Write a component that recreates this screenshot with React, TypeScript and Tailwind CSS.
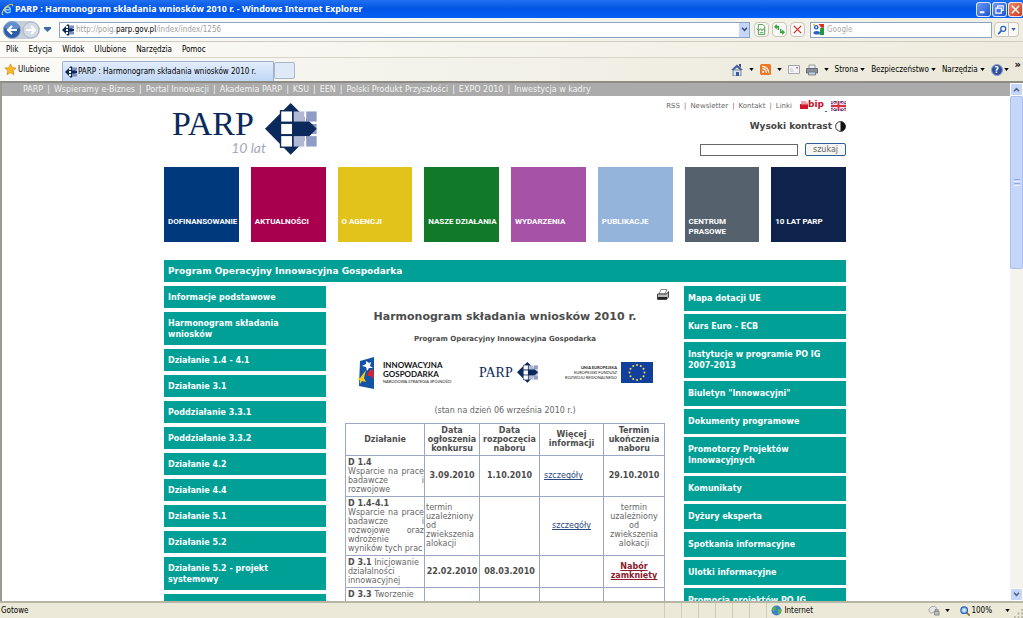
import type { ReactNode } from 'react';
import clsx from 'clsx';

const topLinks = [
  'PARP',
  'Wspieramy e-Biznes',
  'Portal Innowacji',
  'Akademia PARP',
  'KSU',
  'EEN',
  'Polski Produkt Przyszłości',
  'EXPO 2010',
  'Inwestycja w kadry',
];

const tiles = [
  { label: 'DOFINANSOWANIE', color: 'bg-[#003a7d]' },
  { label: 'AKTUALNOŚCI', color: 'bg-[#a8004f]' },
  { label: 'O AGENCJI', color: 'bg-[#e2c31c]' },
  { label: 'NASZE DZIAŁANIA', color: 'bg-[#117a2a]' },
  { label: 'WYDARZENIA', color: 'bg-[#a652a6]' },
  { label: 'PUBLIKACJE', color: 'bg-[#94b4dc]' },
  { label: 'CENTRUM PRASOWE', color: 'bg-[#55626e]' },
  { label: '10 LAT PARP', color: 'bg-[#0e234b]' },
];

const leftMenu = [
  'Informacje podstawowe',
  'Harmonogram składania wniosków',
  'Działanie 1.4 - 4.1',
  'Działanie 3.1',
  'Poddziałanie 3.3.1',
  'Poddziałanie 3.3.2',
  'Działanie 4.2',
  'Działanie 4.4',
  'Działanie 5.1',
  'Działanie 5.2',
  'Działanie 5.2 - projekt systemowy',
];

const rightMenu = [
  'Mapa dotacji UE',
  'Kurs Euro - ECB',
  'Instytucje w programie PO IG 2007-2013',
  'Biuletyn "Innowacyjni"',
  'Dokumenty programowe',
  'Promotorzy Projektów Innowacyjnych',
  'Komunikaty',
  'Dyżury eksperta',
  'Spotkania informacyjne',
  'Ulotki informacyjne',
  'Promocja projektów PO IG',
];

function Caret({ className = 'text-black' }: { className?: string }) {
  return (
    <svg viewBox="0 0 6 4" className={clsx('h-[3px] w-[5px] shrink-0', className)} aria-hidden="true">
      <path d="M0 0h6L3 4z" fill="currentColor" />
    </svg>
  );
}

function IeLogo() {
  return (
    <svg viewBox="0 0 14 14" className="size-[13px] shrink-0" aria-hidden="true">
      <path d="M11 8.2H5.2c.2 1.700 3 2 4 .6h2c-1 3.400-8 3.600-8.300-1.600C2.900 2 11 1.400 11 8.200zM5.300 6.500h3.600c-.3-1.700-3.200-1.800-3.600 0z" fill="#7fd0fa" />
      <path d="M2.500 12.500C-.5 13 2 6.500 7 3c3-2 6-2.600 5.500.5" fill="none" stroke="#f2c443" strokeWidth="1.200" />
    </svg>
  );
}

function ParpMark({ className }: { className: string }) {
  return (
    <svg viewBox="0 0 154 154" className={clsx('shrink-0', className)} aria-hidden="true">
      <rect x="122" y="62" width="31" height="30" fill="#8f9cc6" />
      <path d="M0 76 76 0l77 76-77 77z" fill="#0b2a5b" />
      <rect x="44" y="21" width="40" height="112" fill="#0b2a5b" />
      <rect x="48" y="25" width="32" height="30" fill="#fff" />
      <rect x="48" y="62" width="32" height="30" fill="#fff" />
      <rect x="48" y="98" width="32" height="31" fill="#fff" />
      <rect x="85" y="25" width="32" height="30" fill="#b1b8d3" />
      <rect x="85" y="98" width="32" height="31" fill="#b1b8d3" />
      <path d="M117 25h5v30h-5zM117 98h5v31h-5z" fill="#fff" />
      <rect x="122" y="25" width="31" height="30" fill="#8f9cc6" />
      <rect x="122" y="98" width="31" height="31" fill="#8f9cc6" />
    </svg>
  );
}

// simplified emblem for the 11px favicon slots
function Favicon() {
  return (
    <svg viewBox="0 0 12 12" className="size-[12px] shrink-0" aria-hidden="true">
      <path d="M0 6 6 0l6 6-6 6z" fill="#0b2a5b" />
      <path d="M7 1.500h5v3H7zM7 7.500h5v3H7z" fill="#7d8db9" />
      <path d="M4 2h2v2H4zM4 5h2v2H4zM4 8h2v2H4z" fill="#fff" />
      <path d="M6 5h6v2H6z" fill="#0b2a5b" />
    </svg>
  );
}

function TitleButton({ label, red, children }: { label: string; red?: boolean; children: ReactNode }) {
  return (
    <button
      type="button"
      aria-label={label}
      className={clsx(
        'flex size-[15px] items-center justify-center rounded-[3px] border border-white/80',
        red ? 'bg-linear-to-br from-[#f08a6a] to-[#c8381a]' : 'bg-linear-to-br from-[#6f9bf5] to-[#1f50d0]'
      )}
    >
      <svg viewBox="0 0 12 12" className="size-[11px]" fill="none" stroke="#fff" strokeWidth="1.600">
        {children}
      </svg>
    </button>
  );
}

function TitleBar() {
  return (
    <div className="flex h-[18px] shrink-0 items-center bg-linear-to-b from-[#1f6ff0] via-[#0054e3] to-[#0560fb] pl-px text-white">
      <IeLogo />
      <h1 className="ml-px flex-1 truncate font-['Noto_Sans',sans-serif] text-[9px] font-bold">
        PARP : Harmonogram składania wniosków 2010 r. - Windows Internet Explorer
      </h1>
      <div className="flex gap-px">
        <TitleButton label="Minimalizuj">
          <path d="M2 9h5" strokeWidth="2.200" />
        </TitleButton>
        <TitleButton label="Przywróć">
          <path d="M4 4V2h6v5H8M2 4.500h6V10H2z" strokeWidth="1.200" />
        </TitleButton>
        <TitleButton label="Zamknij" red>
          <path d="m2 2 8 8M10 2l-8 8" />
        </TitleButton>
      </div>
    </div>
  );
}

const toolButton = 'flex h-[15px] items-center justify-center rounded-sm border border-[#c9c6b8] bg-[#faf9f5]';

function AddressBar() {
  return (
    <div className="flex h-6 shrink-0 items-center border-b border-[#d0cdbf] bg-linear-to-r from-[#fbfbf8] to-[#f0eee3] pr-1 pl-[3px]">
      <div className="flex items-center rounded-full bg-[#c5ced9]">
        <button type="button" aria-label="Wstecz">
          <svg viewBox="0 0 18 18" className="size-[18px]">
            <circle cx="9" cy="9" r="8.500" fill="#2a5caa" stroke="#8fa5c4" />
            <path d="M2 7a7 7 0 0 1 14 0c-3 2-11 2-14 0z" fill="#7ba4dd" opacity=".7" />
            <path d="M14 9H5m4-4L5 9l4 4" fill="none" stroke="#fff" strokeWidth="2.200" />
          </svg>
        </button>
        <button type="button" aria-label="Dalej" className="ml-px">
          <svg viewBox="0 0 18 18" className="size-[18px]">
            <circle cx="9" cy="9" r="8" fill="#d3dbe5" stroke="#a9b4c2" />
            <path d="M4 9h9M9 5l4 4-4 4" fill="none" stroke="#fff" strokeWidth="2.200" />
          </svg>
        </button>
      </div>
      <button type="button" aria-label="Ostatnie strony" className="mx-1">
        <svg viewBox="0 0 7 5" className="h-[5px] w-[7px]">
          <path d="M0 0h7v1.500L3.500 5 0 1.500z" fill="#3c6ca8" />
        </svg>
      </button>
      <div className="ml-1 flex h-4 flex-1 items-center border border-[#8aa5c4] bg-white pl-[2px]">
        <Favicon />
        <p className="ml-[2px] flex-1 truncate text-[8px] text-[#a0a0a0]">
          http://poig.<span className="text-black">parp.gov.pl</span>/index/index/1256
        </p>
        <button type="button" aria-label="Historia adresów" className="flex h-[14px] w-[10px] items-center justify-center bg-[#c6d6f8]">
          <svg viewBox="0 0 8 6" className="h-[5px] w-[7px]" fill="none" stroke="#34507e" strokeWidth="1.800">
            <path d="m1 1 3 3 3-3" />
          </svg>
        </button>
      </div>
      <div className="ml-1 flex gap-[3px]">
        <button type="button" aria-label="Widok zgodności" className={clsx(toolButton, 'w-[15px]')}>
          <svg viewBox="0 0 12 12" className="size-[11px]" fill="none" stroke="#4b9a52">
            <path d="M2.500.5h5l2 2v9h-7zM1 5l2 2.500L5 5l1.500 2.500L8 5l2 2.500M4 9.500h4" />
          </svg>
        </button>
        <button type="button" aria-label="Odśwież" className={clsx(toolButton, 'w-[15px]')}>
          <svg viewBox="0 0 12 12" className="size-[11px]" fill="#35a343">
            <path d="M3 0v2h2.500v4.500H4V4H3v2L0 3zM9 12v-2H6.500V5.500H8V8h1V6l3 3z" />
          </svg>
        </button>
        <button type="button" aria-label="Zatrzymaj" className={clsx(toolButton, 'w-[15px]')}>
          <svg viewBox="0 0 12 12" className="size-[11px]" fill="none" stroke="#d32f2f" strokeWidth="1.400">
            <path d="m2 2 8 8M10 2l-8 8" />
          </svg>
        </button>
      </div>
      <div className="ml-[5px] flex h-4 w-[182px] items-center border border-[#8aa5c4] bg-white pl-[2px]">
        <svg viewBox="0 0 12 12" className="size-[11px] shrink-0" aria-hidden="true">
          <path d="M0 0h12v12H0z" fill="#fff" />
          <path d="M6 0h6v4H9z" fill="#e02b20" />
          <path d="M8 4h4v8H7z" fill="#1c9a3e" />
          <circle cx="3.500" cy="3.500" r="2.500" fill="#2a5fc4" />
          <ellipse cx="4" cy="9.500" rx="3.500" ry="2" fill="#2a5fc4" />
          <path d="M0 0h2v2H0z" fill="#f5c518" />
          <circle cx="3.500" cy="3.500" r="1" fill="#fff" />
        </svg>
        <input
          type="text"
          aria-label="Szukaj w Google"
          placeholder="Google"
          className="ml-[3px] w-full text-[8px] outline-none placeholder:text-[#a9a9a9]"
        />
      </div>
      <div className="ml-[2px] flex">
        <button type="button" aria-label="Szukaj" className={clsx(toolButton, 'w-[15px] rounded-r-none')}>
          <svg viewBox="0 0 12 12" className="size-[10px]" fill="none" stroke="#2f63c0" strokeWidth="1.500">
            <circle cx="7.500" cy="4.500" r="3" />
            <path d="M5.500 6.500 1.500 11" strokeWidth="2" />
          </svg>
        </button>
        <button type="button" aria-label="Opcje wyszukiwania" className={clsx(toolButton, 'w-[10px] rounded-l-none border-l-0')}>
          <Caret className="text-[#2f63c0]" />
        </button>
      </div>
    </div>
  );
}

function MenuBar() {
  return (
    <nav className="flex h-4 shrink-0 items-center gap-[10px] border-b border-[#d8d5c8] bg-linear-to-r from-[#fbfbf8] to-[#efecdf] pl-[6px] text-[8px]">
      {['Plik', 'Edycja', 'Widok', 'Ulubione', 'Narzędzia', 'Pomoc'].map((item) => (
        <button key={item} type="button">
          {item}
        </button>
      ))}
    </nav>
  );
}

function TabBar() {
  return (
    <div className="flex h-[25px] shrink-0 items-center border-b-2 border-[#8d8d86] bg-linear-to-r from-[#fafaf7] to-[#ebe8d9] text-[8px]">
      <button type="button" className="flex w-[62px] items-center gap-px pl-1">
        <svg viewBox="0 0 14 14" className="size-[13px]" aria-hidden="true">
          <path d="m7 1 1.800 4 4.200.4-3.200 2.900 1 4.300L7 10.300l-3.800 2.300 1-4.300L1 5.400 5.200 5z" fill="#fbb82a" stroke="#d98a12" strokeWidth=".8" />
        </svg>
        Ulubione
      </button>
      <div className="flex h-full items-end">
        <button type="button" className="flex h-5 w-[212px] items-center gap-px rounded-t-xs border border-b-0 border-[#9fb2cc] bg-linear-to-b from-[#e3edfb] to-[#c0d7f5] pl-[2px]">
          <Favicon />
          PARP : Harmonogram składania wniosków 2010 r.
        </button>
        <button type="button" aria-label="Nowa karta" className="mb-[2px] h-[17px] w-[21px] rounded-xs border border-[#a9b7ca] bg-[#dfe9f7]" />
      </div>
      <div className="ml-auto flex items-center gap-[6px] pr-[2px]">
        <button type="button" aria-label="Strona główna" className="flex items-center gap-[6px]">
          <svg viewBox="0 0 12 12" className="size-[12px]">
            <path d="M2 6h8v6H2z" fill="#dbe4f3" stroke="#5b6d94" strokeWidth=".8" />
            <path d="M0 6 6 .5 12 6H9L6 3.500 3 6z" fill="#4a62a4" />
            <path d="M8 0h2v4L8 2z" fill="#3a4c86" />
            <path d="M5 8h3v4H5z" fill="#3d5998" />
          </svg>
          <Caret />
        </button>
        <button type="button" aria-label="Kanały" className="flex items-center gap-[6px]">
          <svg viewBox="0 0 12 12" className="size-[11px]">
            <rect width="12" height="12" rx="2" fill="#ee7724" />
            <circle cx="3.500" cy="8.500" r="1.200" fill="#fff" />
            <path d="M2.500 5a4.500 4.500 0 0 1 4.500 4.500M2.500 2.500a7 7 0 0 1 7 7" fill="none" stroke="#fff" strokeWidth="1.300" />
          </svg>
          <Caret />
        </button>
        <button type="button" aria-label="Poczta">
          <svg viewBox="0 0 12 9" className="h-[9px] w-[12px]">
            <path d="M.5.5h11v8H.5z" fill="#f4f4f6" stroke="#a5a5b2" />
            <path d="M2 4h3M2 6h4" stroke="#c5c5d0" />
            <path d="M8 2h2v1.500H8z" fill="#c9778a" />
          </svg>
        </button>
        <button type="button" aria-label="Drukuj" className="flex items-center gap-[6px]">
          <svg viewBox="0 0 12 12" className="size-[12px]">
            <path d="M3 1h6v4H3z" fill="#e7edf5" stroke="#777" strokeWidth=".7" />
            <path d="M.500 4.500h11V9H.5z" fill="#8b8f98" stroke="#555a63" strokeWidth=".8" />
            <path d="M2.500 8h7v3h-7z" fill="#b9d2f0" stroke="#666" strokeWidth=".7" />
          </svg>
          <Caret />
        </button>
        {['Strona', 'Bezpieczeństwo', 'Narzędzia'].map((item) => (
          <button key={item} type="button" className="flex items-center gap-[2px]">
            {item}
            <Caret />
          </button>
        ))}
        <button type="button" aria-label="Pomoc" className="flex items-center gap-px">
          <span className="flex size-[12px] items-center justify-center rounded-full border border-[#8ea3cc] bg-[#2e4fa0] text-[9px] leading-[10px] font-bold text-white">?</span>
          <Caret />
        </button>
        <span className="mb-2 text-[11px] font-bold">»</span>
      </div>
    </div>
  );
}

function BipLogo() {
  return (
    <span className="flex h-[12px] items-start">
      <svg viewBox="0 0 8 9" className="mt-px h-[9px] w-2" aria-hidden="true">
        <path d="M0 3h8v5H0z" fill="#d3122e" />
        <path d="M1 0h4l3 2v1.500H1z" fill="#e9a0aa" />
      </svg>
      <span className="text-[9px] leading-[9px] font-bold text-[#c8102e]">bip</span>
      <i className="ml-px h-px w-[2px] self-end bg-[#4a5da8]" />
    </span>
  );
}

function UkFlag() {
  return (
    <svg viewBox="0 0 30 20" className="h-[10px] w-[15px]" aria-hidden="true">
      <path d="M0 0h30v20H0z" fill="#3a52a0" />
      <path d="m0 0 30 20M30 0 0 20" stroke="#fff" strokeWidth="4" />
      <path d="m0 0 30 20M30 0 0 20" stroke="#d8434e" strokeWidth="2" />
      <path d="M15 0v20M0 10h30" stroke="#fff" strokeWidth="7" />
      <path d="M15 0v20M0 10h30" stroke="#d8303e" strokeWidth="4" />
    </svg>
  );
}

function Header() {
  return (
    <header className="flex justify-between">
      <a href="#" aria-label="PARP 10 lat" className="mt-[7px] flex h-[52px] pl-2 text-[#0b2a5b]">
        <span className="flex flex-col items-end">
          <span className="font-['Liberation_Serif',serif] text-[34px] leading-[42px]">PARP</span>
          <span className="-mt-1 -mr-3 font-['Lato',sans-serif] text-[14px] leading-[14px] text-[#a3a9bb] italic">10 lat</span>
        </span>
        <ParpMark className="ml-[11px] size-[52px]" />
      </a>
      <div className="flex flex-col items-end text-[#666]">
        <div className="mt-[3px] flex h-[13px] items-center gap-1 text-[7px]">
          {['RSS', 'Newsletter', 'Kontakt', 'Linki'].map((item, i) => (
            <span key={item} className="flex items-center gap-1 pt-[2px]">
              {i > 0 && <span className="text-[#a5516c]">|</span>}
              <a href="#">{item}</a>
            </span>
          ))}
          <a href="#" className="ml-1">
            <BipLogo />
          </a>
          <a href="#" aria-label="English">
            <UkFlag />
          </a>
        </div>
        <a href="#" className="mt-[7px] flex items-center gap-[3px] text-[9px] leading-[14px] font-bold text-[#444]">
          Wysoki kontrast
          <svg viewBox="0 0 12 12" className="size-[11px]" aria-hidden="true">
            <circle cx="6" cy="6" r="5.300" fill="#fff" stroke="#222" />
            <path d="M6 .5a5.500 5.500 0 0 1 0 11z" fill="#111" />
          </svg>
        </a>
        <form className="mt-[10px] flex items-center gap-[7px]">
          <input type="text" aria-label="Szukaj" className="h-[12px] w-[98px] border border-[#666] bg-white" />
          <button type="button" className="h-[13px] w-[41px] rounded-xs border border-[#2f5f9a] bg-[#f5f5f2] text-[8px] leading-[10px]">
            szukaj
          </button>
        </form>
      </div>
    </header>
  );
}

function SideMenu({ items, itemClass, gap }: { items: string[]; itemClass: string; gap: string }) {
  return (
    <nav className={clsx('flex flex-col', gap)}>
      {items.map((item) => (
        <a
          key={item}
          href="#"
          className={clsx('bg-[#00a097] pr-4 pl-1 text-[8px] leading-[11px] font-bold text-white', itemClass)}
        >
          {item}
        </a>
      ))}
      <div className="flex-1 bg-[#00a097]" />
    </nav>
  );
}

function PartnerLogos() {
  return (
    <div className="mt-[12px] flex h-8 items-center px-3 text-left">
      <svg viewBox="0 0 18 32" className="h-8 w-[18px] shrink-0" aria-hidden="true">
        <path d="M3 4 17 0v32L2 29z" fill="#1554a4" />
        <path d="m14 5-1 4 3 2-4 0-2 3-1-4-4-1 4-2 0-3 3 2z" fill="#fff" />
        <path d="M9 13 3 21l-3 1 3 1 0 4 2-3 4 1-2-4z" fill="#f7c81e" />
        <path d="m16 12-4 2-2 5 4 0 3 3z" fill="#e2212c" />
      </svg>
      <div className="ml-2 flex w-[70px] flex-col font-['Lato',sans-serif] text-[#111]">
        <span className="text-[8px] leading-[9px] font-bold">INNOWACYJNA</span>
        <span className="text-[8px] leading-[9px] font-bold">GOSPODARKA</span>
        <span className="text-[4px] leading-[6px] whitespace-nowrap">NARODOWA STRATEGIA SPÓJNOŚCI</span>
      </div>
      <div className="ml-[26px] flex items-center gap-1 text-[#0b2a5b]">
        <span className="font-['Liberation_Serif',serif] text-[14px] leading-5">PARP</span>
        <ParpMark className="size-[21px]" />
      </div>
      <div className="ml-auto flex items-center gap-1">
        <div className="flex flex-col text-right font-['Lato',sans-serif] text-[4px] leading-[5px] whitespace-nowrap text-[#222]">
          <span className="font-bold">UNIA EUROPEJSKA</span>
          <span>EUROPEJSKI FUNDUSZ</span>
          <span>ROZWOJU REGIONALNEGO</span>
        </div>
        <svg viewBox="0 0 32 21" className="h-[21px] w-8" aria-hidden="true">
          <path d="M0 0h32v21H0z" fill="#123f9c" />
          {Array.from({ length: 12 }, (_, i) => (
            <circle
              key={i}
              cx={16 + 7.5 * Math.cos((i * Math.PI) / 6)}
              cy={10.5 + 7.5 * Math.sin((i * Math.PI) / 6)}
              r="1"
              fill="#f4e04a"
            />
          ))}
        </svg>
      </div>
    </div>
  );
}

const border = 'border border-[#9ba8c4]';
const firstCell = clsx(border, 'px-[2px] py-[2px] text-left');
const justifiedCell = clsx(border, 'py-[2px] pl-[2px] text-justify');
const dateCell = clsx(border, 'font-bold text-[#4d4d4d]');
const detailsLink = 'text-[#2a4a80] underline';

function ScheduleTable() {
  return (
    <table className="mt-[6px] w-full table-fixed border-collapse text-center text-[8px] leading-[9px] text-[#666]">
      <colgroup>
        <col />
        <col className="w-[55px]" />
        <col className="w-[60px]" />
        <col className="w-[64px]" />
        <col className="w-[61px]" />
      </colgroup>
      <thead className="text-[#4d4d4d]">
        <tr>
          {['Działanie', 'Data ogłoszenia konkursu', 'Data rozpoczęcia naboru', 'Więcej informacji', 'Termin ukończenia naboru'].map((head) => (
            <th key={head} scope="col" className={clsx(border, 'py-[2px]')}>
              {head}
            </th>
          ))}
        </tr>
      </thead>
      <tbody>
        <tr>
          <td className={justifiedCell}>
            <b className="text-[#4d4d4d]">D 1.4</b>
            <br />
            Wsparcie na prace badawcze i rozwojowe
          </td>
          <td className={dateCell}>3.09.2010</td>
          <td className={dateCell}>1.10.2010</td>
          <td className={clsx(border, 'pl-1 text-left')}>
            <a href="#" className={detailsLink}>szczegóły</a>
          </td>
          <td className={dateCell}>29.10.2010</td>
        </tr>
        <tr>
          <td className={justifiedCell}>
            <b className="text-[#4d4d4d]">D 1.4-4.1</b>
            <br />
            Wsparcie na prace badawcze i rozwojowe oraz wdrożenie wyników tych prac
          </td>
          <td className={clsx(border, 'pl-px text-left')}>termin uzależniony od zwiekszenia alokacji</td>
          <td className={border} />
          <td className={border}>
            <a href="#" className={detailsLink}>szczegóły</a>
          </td>
          <td className={border}>termin uzależniony od zwiekszenia alokacji</td>
        </tr>
        <tr>
          <td className={firstCell}>
            <b className="text-[#4d4d4d]">D 3.1</b> Inicjowanie działalności innowacyjnej
          </td>
          <td className={dateCell}>22.02.2010</td>
          <td className={dateCell}>08.03.2010</td>
          <td className={border} />
          <td className={border}>
            <a href="#" className="font-bold text-[#8b1a2b] underline">Nabór zamknięty</a>
          </td>
        </tr>
        <tr>
          <td className={firstCell}>
            <b className="text-[#4d4d4d]">D 3.3</b> Tworzenie
          </td>
          <td className={border} />
          <td className={border} />
          <td className={border} />
          <td className={border} />
        </tr>
      </tbody>
    </table>
  );
}

function Article() {
  return (
    <article className="px-[19px] text-center">
      <div className="-mr-1 flex h-[14px] items-center justify-end pt-1">
        <button type="button" aria-label="Drukuj stronę">
          <svg viewBox="0 0 12 11" className="h-[11px] w-[12px]">
            <path d="M4 .5h6L8 5H2z" fill="#fff" stroke="#666" strokeWidth=".8" />
            <path d="M.5 5h9l2-2.500V8l-2 2.500h-9z" fill="#bbb" stroke="#222" strokeWidth=".8" />
            <path d="M1 8h9v2H1z" fill="#222" />
          </svg>
        </button>
      </div>
      <h2 className="mt-[9px] text-[11px] leading-4 font-bold text-[#4d4d4d]">Harmonogram składania wniosków 2010 r.</h2>
      <p className="mt-2 text-[7px] leading-3 font-bold text-[#4d4d4d]">Program Operacyjny Innowacyjna Gospodarka</p>
      <PartnerLogos />
      <p className="mt-4 text-[8px] leading-3 text-[#666]">(stan na dzień 06 września 2010 r.)</p>
      <ScheduleTable />
    </article>
  );
}

function Page() {
  return (
    <div className="flex min-w-0 flex-1 flex-col overflow-hidden bg-white font-['DejaVu_Sans',sans-serif]">
      <nav className="flex h-[13px] shrink-0 items-center gap-1 bg-[#ababab] pl-[21px] text-[8px] text-[#f2f2f2]">
        {topLinks.map((item, i) => (
          <span key={item} className="flex items-center gap-1">
            {i > 0 && <span>|</span>}
            <a href="#">{item}</a>
          </span>
        ))}
      </nav>
      <div className="min-h-0 flex-1 pr-[2px]">
        <div className="mx-auto flex h-full w-full max-w-[682px] flex-col">
          <Header />
          <nav className="mt-[11px] grid grid-cols-8 gap-3">
            {tiles.map((tile) => (
              <a
                key={tile.label}
                href="#"
                className={clsx(
                  "flex aspect-square flex-col pt-[50px] pl-1 font-['Roboto',sans-serif] text-[8px] leading-[10px] font-bold text-white",
                  tile.color
                )}
              >
                {tile.label}
              </a>
            ))}
          </nav>
          <h2 className="mt-[18px] bg-[#00a097] pl-1 text-[9px] leading-[22px] font-bold text-white">
            Program Operacyjny Innowacyjna Gospodarka
          </h2>
          <div className="mt-1 grid min-h-0 flex-1 grid-cols-[162px_1fr_162px]">
            <SideMenu items={leftMenu} itemClass="pt-[6px] pb-[5px]" gap="gap-1" />
            <Article />
            <SideMenu items={rightMenu} itemClass="py-[7px]" gap="gap-[3px]" />
          </div>
        </div>
      </div>
    </div>
  );
}

function ScrollBar() {
  return (
    <div className="flex w-[13px] shrink-0 flex-col bg-[#f4f3ee]">
      <button type="button" aria-label="Przewiń w górę" className="flex h-[13px] items-center justify-center rounded-xs border border-white bg-[#c6d6fb]">
        <svg viewBox="0 0 8 6" className="h-[5px] w-[7px]" fill="none" stroke="#4d6185" strokeWidth="1.800">
          <path d="m1 5 3-3 3 3" />
        </svg>
      </button>
      <div className="flex h-[173px] flex-col items-center justify-center gap-px rounded-xs border border-[#a9c0f0] bg-[#c6d6fb]">
        <i className="h-px w-[6px] bg-[#8fa9e0]" />
        <i className="h-px w-[6px] bg-[#eef3ff]" />
        <i className="h-px w-[6px] bg-[#8fa9e0]" />
        <i className="h-px w-[6px] bg-[#eef3ff]" />
      </div>
      <button type="button" aria-label="Przewiń w dół" className="mt-auto flex h-[13px] items-center justify-center rounded-xs border border-white bg-[#c6d6fb]">
        <svg viewBox="0 0 8 6" className="h-[5px] w-[7px]" fill="none" stroke="#4d6185" strokeWidth="1.800">
          <path d="m1 1 3 3 3-3" />
        </svg>
      </button>
    </div>
  );
}

function StatusBar() {
  return (
    <footer className="flex h-[17px] shrink-0 items-center border-t-2 border-[#b8b5a6] bg-[#ece9d8] pl-px text-[8px]">
      <span className="flex-1">Gotowe</span>
      <div className="flex h-full">
        {Array.from({ length: 7 }, (_, i) => (
          <i key={i} className="h-full w-[17px] border-l border-[#cfccba]" />
        ))}
      </div>
      <span className="-ml-3 flex w-[157px] items-center gap-[2px]">
        <svg viewBox="0 0 12 12" className="size-[11px]" aria-hidden="true">
          <circle cx="6" cy="6" r="5.500" fill="#3f7fcb" />
          <path d="M2 2.500c3-2 4 0 3 2L3 7 1 5zM7 5l4-1c1 3-1 6-3 6.500z" fill="#5cb451" />
        </svg>
        Internet
      </span>
      <button type="button" aria-label="Tryb chroniony" className="flex w-8 items-center gap-1">
        <svg viewBox="0 0 14 12" className="h-[11px] w-[13px]">
          <path d="M1 5c1-4 8-5 8-1L6 8C3 10 1 8 1 5z" fill="#e6e6e6" stroke="#999" />
          <path d="M7 7h5v4H7zM8 7V5h3v2" fill="#bbb" stroke="#888" />
        </svg>
        <Caret />
      </button>
      <button type="button" className="flex items-center gap-px">
        <svg viewBox="0 0 12 12" className="size-[10px]" aria-hidden="true">
          <circle cx="5" cy="5" r="4" fill="#8fc0f2" stroke="#2d62b4" strokeWidth="1.400" />
          <path d="m8 8 3.500 3.500" stroke="#8a6a3a" strokeWidth="2" />
          <path d="M5 3v4M3 5h4" stroke="#fff" />
        </svg>
        100%
        <span className="ml-3">
          <Caret />
        </span>
      </button>
      <svg viewBox="0 0 10 10" className="ml-1 size-[9px] self-end" aria-hidden="true">
        <path d="M8 0h2v2H8zM8 4h2v2H8zM4 4h2v2H4zM8 8h2v2H8zM4 8h2v2H4zM0 8h2v2H0z" fill="#b5b2a0" />
      </svg>
    </footer>
  );
}

export default function App() {
  return (
    <div className="flex h-screen flex-col overflow-hidden bg-[#ece9d8] font-['DejaVu_Sans_Condensed','DejaVu_Sans',sans-serif] text-black">
      <TitleBar />
      <AddressBar />
      <MenuBar />
      <TabBar />
      <main className="flex min-h-0 flex-1 border-l-2 border-[#9a9a94]">
        <Page />
        <ScrollBar />
      </main>
      <StatusBar />
    </div>
  );
}
